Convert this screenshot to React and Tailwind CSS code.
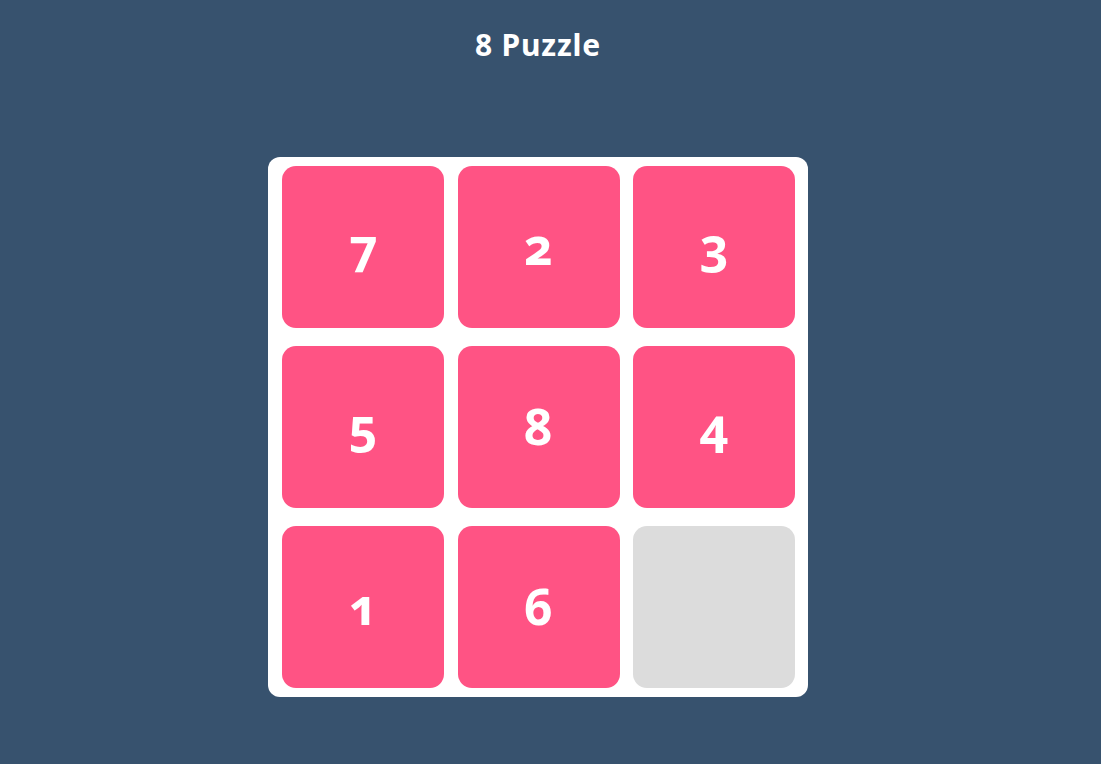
export default function App() {
  const tiles = [7, 2, 3, 5, 8, 4, 1, 6, null];
  return (
    <div className="min-h-[764px] w-full bg-[#37526e] flex flex-col items-center pr-[25px]" style={{ fontFamily: '"Noto Sans", Lato, sans-serif' }}>
      <h1 className="pt-[26px] text-[30px] leading-[38px] font-bold text-white tracking-[0.8px]">8 Puzzle</h1>
      <div className="mt-[93px] bg-white rounded-[12px] grid grid-cols-[162px_162px_162px] gap-x-[13.5px] gap-y-[18px] pt-[9px] pb-[9px] pl-[14px] pr-[13px]">
        {tiles.map((t, i) =>
          t ? (
            <div key={i} className="w-[162px] h-[162px] rounded-[14px] bg-[#ff5384] flex items-center justify-center text-white font-bold text-[50px] oldstyle-nums pb-[2px]">
              {t}
            </div>
          ) : (
            <div key={i} className="w-[162px] h-[162px] rounded-[14px] bg-[#dcdcdc]" />
          )
        )}
      </div>
    </div>
  );
}
